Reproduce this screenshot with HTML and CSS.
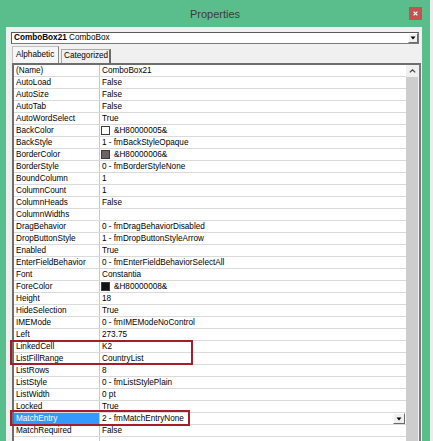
FILE: index.html
```html
<!DOCTYPE html>
<html>
<head>
<meta charset="utf-8">
<title>Properties</title>
<link rel="stylesheet" href="styles.css">
</head>
<body>
<div class="window">
  <div class="titlebar">
    <span></span>
    <span class="title">Properties</span>
    <span class="close"><svg width="5" height="5" viewBox="0 0 5 5"><path d="M0.6 0.6L4.4 4.4M4.4 0.6L0.6 4.4" stroke="#fff" stroke-width="1.3"/></svg></span>
  </div>
  <div class="panel">
    <div class="combo">
      <span class="combo-text"><b>ComboBox21</b> ComboBox</span>
      <span class="dd"><svg width="6" height="4" viewBox="0 0 6 4"><path d="M0.5 0.5H5.5L3 3.5Z" fill="#000"/></svg></span>
    </div>
    <div class="tabs">
      <div class="tab active">Alphabetic</div>
      <div class="tab">Categorized</div>
    </div>
    <div class="grid">
      <div class="rows">
        <div class="row"><div class="name">(Name)</div><div class="val">ComboBox21</div></div>
        <div class="row"><div class="name">AutoLoad</div><div class="val">False</div></div>
        <div class="row"><div class="name">AutoSize</div><div class="val">False</div></div>
        <div class="row"><div class="name">AutoTab</div><div class="val">False</div></div>
        <div class="row"><div class="name">AutoWordSelect</div><div class="val">True</div></div>
        <div class="row"><div class="name">BackColor</div><div class="val"><span class="swatch sw-white"></span>&amp;H80000005&amp;</div></div>
        <div class="row"><div class="name">BackStyle</div><div class="val">1 - fmBackStyleOpaque</div></div>
        <div class="row"><div class="name">BorderColor</div><div class="val"><span class="swatch sw-gray"></span>&amp;H80000006&amp;</div></div>
        <div class="row"><div class="name">BorderStyle</div><div class="val">0 - fmBorderStyleNone</div></div>
        <div class="row"><div class="name">BoundColumn</div><div class="val">1</div></div>
        <div class="row"><div class="name">ColumnCount</div><div class="val">1</div></div>
        <div class="row"><div class="name">ColumnHeads</div><div class="val">False</div></div>
        <div class="row"><div class="name">ColumnWidths</div><div class="val"></div></div>
        <div class="row"><div class="name">DragBehavior</div><div class="val">0 - fmDragBehaviorDisabled</div></div>
        <div class="row"><div class="name">DropButtonStyle</div><div class="val">1 - fmDropButtonStyleArrow</div></div>
        <div class="row"><div class="name">Enabled</div><div class="val">True</div></div>
        <div class="row"><div class="name">EnterFieldBehavior</div><div class="val">0 - fmEnterFieldBehaviorSelectAll</div></div>
        <div class="row"><div class="name">Font</div><div class="val">Constantia</div></div>
        <div class="row"><div class="name">ForeColor</div><div class="val"><span class="swatch sw-black"></span>&amp;H80000008&amp;</div></div>
        <div class="row"><div class="name">Height</div><div class="val">18</div></div>
        <div class="row"><div class="name">HideSelection</div><div class="val">True</div></div>
        <div class="row"><div class="name">IMEMode</div><div class="val">0 - fmIMEModeNoControl</div></div>
        <div class="row"><div class="name">Left</div><div class="val">273.75</div></div>
        <div class="row"><div class="name">LinkedCell</div><div class="val">K2</div></div>
        <div class="row"><div class="name">ListFillRange</div><div class="val">CountryList</div></div>
        <div class="row"><div class="name">ListRows</div><div class="val">8</div></div>
        <div class="row"><div class="name">ListStyle</div><div class="val">0 - fmListStylePlain</div></div>
        <div class="row"><div class="name">ListWidth</div><div class="val">0 pt</div></div>
        <div class="row"><div class="name">Locked</div><div class="val">True</div></div>
        <div class="row selected"><div class="name">MatchEntry</div><div class="val"><span class="val-text">2 - fmMatchEntryNone</span><span class="dd dd-cell"><svg width="6" height="4" viewBox="0 0 6 4"><path d="M0.5 0.5H5.5L3 3.5Z" fill="#000"/></svg></span></div></div>
        <div class="row"><div class="name">MatchRequired</div><div class="val">False</div></div>
        <div class="row"><div class="name"></div><div class="val"></div></div>
      </div>
      <div class="vscroll">
        <div class="up"><svg width="7" height="4" viewBox="0 0 7 4"><path d="M0.8 3.4L3.5 0.8L6.2 3.4" fill="none" stroke="#444" stroke-width="1.2"/></svg></div>
        <div class="track"></div>
      </div>
    </div>
  </div>
  <div class="mark mark-a"></div>
  <div class="mark mark-b"></div>
</div>
</body>
</html>
```

FILE: styles.css
```css
html, body {
  margin: 0;
  padding: 0;
  height: 441px;
  overflow: hidden;
  background: #ececec;
}

body {
  font-family: "Liberation Sans", Arial, sans-serif;
  font-size: 8.2px;
  color: #000;
}

.window {
  position: relative;
  width: 430px;
  height: 470px;
  background: #5abe8c;
  display: flex;
  flex-direction: column;
}

.titlebar {
  height: 27px;
  display: grid;
  grid-template-columns: 1fr auto 1fr;
  align-items: start;
}

.title {
  padding-top: 8px;
  font-size: 11px;
  color: #3a3a3a;
  line-height: 13px;
}

.close {
  justify-self: end;
  margin-top: 7px;
  margin-right: 8px;
  width: 13px;
  height: 13px;
  background: #c75050;
  display: flex;
  align-items: center;
  justify-content: center;
}

.close svg { display: block; }

.panel {
  flex: 1;
  margin: 0 8px 0 6px;
  background: #f0f0f0;
  padding: 5px 3px 0 5px;
  display: flex;
  flex-direction: column;
}

.combo {
  height: 12px;
  box-sizing: border-box;
  border: 1px solid #7a7a7a;
  border-top-color: #5a5a5a;
  border-left-color: #5a5a5a;
  background: #fff;
  display: flex;
  align-items: center;
}

.combo-text {
  flex: 1;
  padding-left: 2px;
  line-height: 10px;
  white-space: nowrap;
}

.combo-text b { font-weight: bold; }

.dd {
  width: 10px;
  height: 10px;
  box-sizing: border-box;
  background: #f0f0f0;
  border: 1px solid #fff;
  border-right-color: #6a6a6a;
  border-bottom-color: #6a6a6a;
  display: flex;
  align-items: center;
  justify-content: center;
}

.dd svg { display: block; }

.tabs {
  margin-top: 2px;
  margin-left: 1px;
  height: 17px;
  display: flex;
  align-items: flex-start;
  gap: 2px;
}

.tab {
  box-sizing: border-box;
  height: 14px;
  margin-top: 3px;
  padding: 0 0 0 2px;
  line-height: 12px;
  white-space: nowrap;
  border-left: 1px solid #a8a8a8;
  border-top: 1px solid #a8a8a8;
  border-right: 2px solid #6a6a6a;
  background: #f0f0f0;
  width: 50px;
}

.tab.active {
  margin-top: 0;
  height: 17px;
  width: 47px;
  padding: 2px 0 0 3px;
  background: #f6f6f6;
  border-left-color: #c0c0c0;
  border-top-color: #c0c0c0;
  border-right: 1px solid #8a8a8a;
}

.grid {
  margin: 0 -2px 0 1px;
  flex: 1;
  display: flex;
  border-top: 2px solid #6d6d6d;
  border-left: 2px solid #6d6d6d;
  border-right: 2px solid #7a7a7a;
  background: #fff;
}

.rows {
  width: 392px;
}

.row {
  height: 11px;
  border-bottom: 1px solid #dadada;
  display: flex;
  line-height: 11px;
  white-space: nowrap;
}

.name {
  width: 83px;
  padding-left: 2px;
  border-right: 1px solid #c8c8c8;
  overflow: hidden;
}

.val {
  flex: 1;
  padding-left: 2px;
  display: flex;
  align-items: center;
  overflow: hidden;
}

.swatch {
  width: 9px;
  height: 9px;
  box-sizing: border-box;
  border: 1px solid #3a3a3a;
  margin: 0 4px 0 -1px;
  flex: none;
}

.sw-white { background: #fff; }
.sw-gray { background: #6c6166; }
.sw-black { background: #141018; }

.selected .name {
  background: #3399ff;
  color: #fff;
}

.val-text { flex: 1; }

.dd-cell {
  width: 12px;
  height: 11px;
  margin-right: 1px;
}

.vscroll {
  width: 12px;
  border-right: 1px solid #f0f0f0;
  display: flex;
  flex-direction: column;
  background: #cdcdcd;
}

.up {
  height: 12px;
  background: #f0f0f0;
  display: flex;
  align-items: center;
  justify-content: center;
}

.up svg { display: block; }

.track { flex: 1; }

.mark {
  position: absolute;
  box-sizing: border-box;
  border: 2px solid #a31d2a;
}

.mark-a {
  left: 10px;
  top: 340px;
  width: 183px;
  height: 25px;
}

.mark-b {
  left: 10px;
  top: 410px;
  width: 180px;
  height: 16px;
}
```
